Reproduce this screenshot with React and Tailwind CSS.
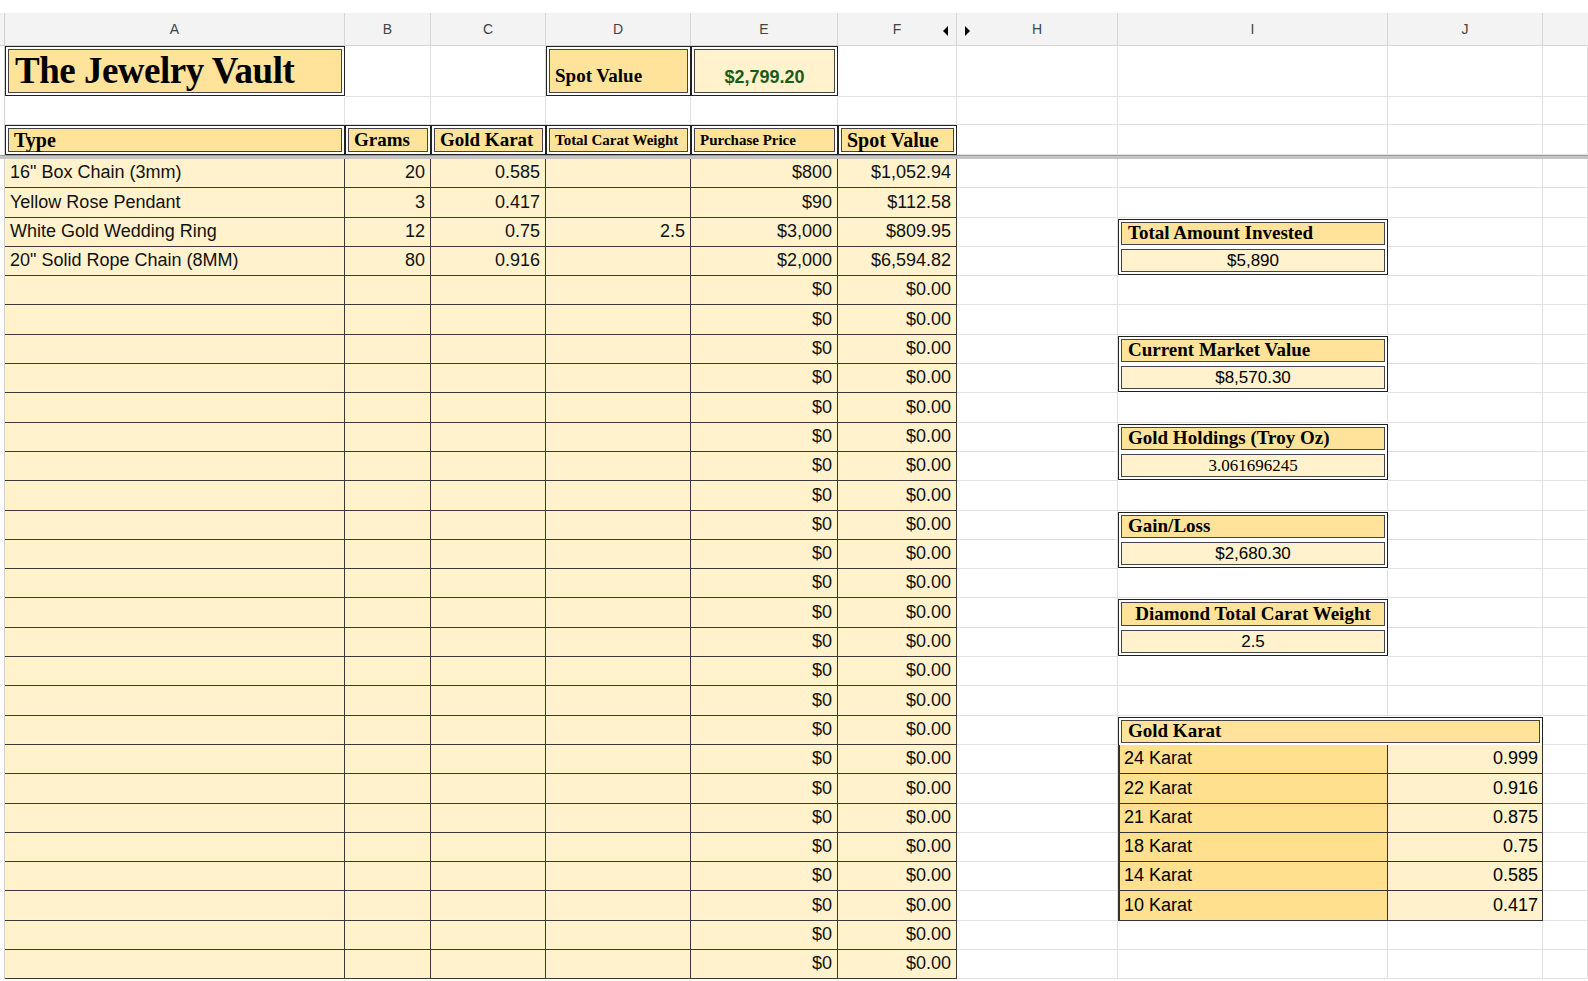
import React from 'react';

const serif = { fontFamily: '"Liberation Serif", "DejaVu Serif", serif' };
const sansF = { fontFamily: '"Liberation Sans", Arial, sans-serif' };

const W = { A: 'w-[340px]', B: 'w-[86px]', C: 'w-[115px]', D: 'w-[145px]', E: 'w-[147px]', F: 'w-[119px]', H: 'w-[161px]', I: 'w-[270px]', J: 'w-[155px]', K: 'flex-1' };

const items = [
  ['16" Box Chain (3mm)', '20', '0.585', '', '$800', '$1,052.94'],
  ['Yellow Rose Pendant', '3', '0.417', '', '$90', '$112.58'],
  ['White Gold Wedding Ring', '12', '0.75', '2.5', '$3,000', '$809.95'],
  ['20" Solid Rope Chain (8MM)', '80', '0.916', '', '$2,000', '$6,594.82'],
];

const boxes = {
  2: ['Total Amount Invested', 'label'], 3: ['$5,890', 'value'],
  6: ['Current Market Value', 'label'], 7: ['$8,570.30', 'value'],
  9: ['Gold Holdings (Troy Oz)', 'label'], 10: ['3.061696245', 'valueSerif'],
  12: ['Gain/Loss', 'label'], 13: ['$2,680.30', 'value'],
  15: ['Diamond Total Carat Weight', 'labelCenter'], 16: ['2.5', 'value'],
};

const karats = [['24 Karat', '0.999'], ['22 Karat', '0.916'], ['21 Karat', '0.875'], ['18 Karat', '0.75'], ['14 Karat', '0.585'], ['10 Karat', '0.417']];

function Grid({ w, className = '', children }) {
  return <div className={`${w} shrink-0 h-full border-r border-b border-[#e1e1e1] ${className}`}>{children}</div>;
}

function Double({ className = '', children, style }) {
  return (
    <div className="h-full p-[2px] border border-[#222]">
      <div className={`h-full border border-[#444] ${className}`} style={style}>{children}</div>
    </div>
  );
}

function RightCells({ i }) {
  const b = boxes[i];
  let I = <Grid w={W.I} />;
  let J = <Grid w={W.J} />;
  if (b) {
    const [text, kind] = b;
    const isLabel = kind.startsWith('label');
    I = (
      <div className={`${W.I} shrink-0 h-full ${isLabel ? 'pt-[1px]' : 'pb-[1px]'}`}>
        <div className={`h-full p-[2px] border-x border-[#222] ${isLabel ? 'border-t' : 'border-b'}`}>
          <div className={`h-full border border-[#444] flex items-center ${isLabel ? 'bg-[#ffe39a] px-[6px] text-[19px] font-bold' : 'bg-[#fff2cc] justify-center text-[17px]'} ${kind === 'labelCenter' ? 'justify-center' : ''}`} style={kind === 'value' ? sansF : serif}>
            {text}
          </div>
        </div>
      </div>
    );
  }
  if (i === 19) {
    I = (
      <div className={`${W.I} shrink-0 h-full pt-[1px]`}>
        <div className="h-full p-[2px] pr-0 border-l border-t border-[#222]">
          <div className="h-full border-y border-l border-[#444] bg-[#ffe39a] flex items-center px-[6px] text-[19px] font-bold" style={serif}>Gold Karat</div>
        </div>
      </div>
    );
    J = (
      <div className={`${W.J} shrink-0 h-full pt-[1px]`}>
        <div className="h-full p-[2px] pl-0 border-r border-t border-[#222]">
          <div className="h-full border-y border-r border-[#444] bg-[#ffe39a]" />
        </div>
      </div>
    );
  }
  if (i >= 20 && i <= 25) {
    const [k, v] = karats[i - 20];
    I = <div className={`${W.I} shrink-0 h-full bg-[#ffe08e] border-l-2 border-r border-b border-[#333] flex items-end pb-[1px] px-[4px] text-[18px]`} style={sansF}>{k}</div>;
    J = <div className={`${W.J} shrink-0 h-full bg-[#fff1cb] border-r border-b border-[#333] flex items-end justify-end pb-[1px] px-[4px] text-[18px]`} style={sansF}>{v}</div>;
  }
  return (
    <>
      <Grid w={W.H} />
      {I}
      {J}
      <Grid w={W.K} />
    </>
  );
}

function DataCell({ w, children, right }) {
  return (
    <div className={`${w} shrink-0 h-full bg-[#fff2cc] border-r border-b border-[#3a3a3a] flex items-end pb-[1px] px-[5px] text-[18px] text-[#111] ${right ? 'justify-end' : ''}`} style={sansF}>
      {children}
    </div>
  );
}

export default function App() {
  const rows = Array.from({ length: 28 }, (_, i) => i);
  const heads = [['A', 'Type', 'text-[20px]'], ['B', 'Grams', 'text-[19px]'], ['C', 'Gold Karat', 'text-[19px]'], ['D', 'Total Carat Weight', 'text-[15px]'], ['E', 'Purchase Price', 'text-[15px]'], ['F', 'Spot Value', 'text-[20px]']];
  return (
    <div className="w-[1588px] h-[981px] overflow-hidden bg-white text-black">
      <div className="h-[13px]" />
      {/* column letters */}
      <div className="flex h-[33px] bg-[#f3f3f3] text-[14px] text-[#444]" style={sansF}>
        <div className="w-[5px] shrink-0 border-r border-b border-[#d0d0d0]" />
        {['A', 'B', 'C', 'D', 'E'].map((c) => (
          <div key={c} className={`${W[c]} shrink-0 border-r border-b border-[#d6d6d6] flex items-center justify-center`}>{c}</div>
        ))}
        <div className={`${W.F} shrink-0 border-r border-b border-[#d6d6d6] flex items-center justify-center relative`}>
          F
          <span className="absolute right-[8px] top-[13px] w-0 h-0 border-y-[5px] border-y-transparent border-r-[5px] border-r-black" />
        </div>
        <div className={`${W.H} shrink-0 border-r border-b border-[#d6d6d6] flex items-center justify-center relative`}>
          <span className="absolute left-[8px] top-[13px] w-0 h-0 border-y-[5px] border-y-transparent border-l-[5px] border-l-black" />
          H
        </div>
        <div className={`${W.I} shrink-0 border-r border-b border-[#d6d6d6] flex items-center justify-center`}>I</div>
        <div className={`${W.J} shrink-0 border-r border-b border-[#d6d6d6] flex items-center justify-center`}>J</div>
        <div className="flex-1 border-b border-[#d6d6d6]" />
      </div>

      {/* title row */}
      <div className="flex h-[51px]">
        <div className="w-[5px] shrink-0 border-r border-[#d0d0d0]" />
        <div className={`${W.A} shrink-0 h-full pb-[1px]`}>
          <Double className="bg-[#ffe39a] flex items-center px-[6px] text-[37px] font-bold tracking-[-0.5px]" style={serif}>The Jewelry Vault</Double>
        </div>
        <Grid w={W.B} />
        <Grid w={W.C} />
        <div className={`${W.D} shrink-0 h-full pb-[1px]`}>
          <Double className="bg-[#ffe39a] flex items-end pb-[2px] px-[5px] text-[19px] font-bold" style={serif}>Spot Value</Double>
        </div>
        <div className={`${W.E} shrink-0 h-full pb-[1px]`}>
          <Double className="bg-[#fff2cc] flex items-end justify-center pb-[1px] text-[18px] font-bold text-[#1c5a1c]" style={sansF}>$2,799.20</Double>
        </div>
        <Grid w={W.F} />
        <Grid w={W.H} />
        <Grid w={W.I} />
        <Grid w={W.J} />
        <Grid w={W.K} />
      </div>

      {/* blank row */}
      <div className="flex h-[28px]">
        <div className="w-[5px] shrink-0 border-r border-[#d0d0d0]" />
        {['A', 'B', 'C', 'D', 'E', 'F', 'H', 'I', 'J', 'K'].map((c) => <Grid key={c} w={W[c]} />)}
      </div>

      {/* header row */}
      <div className="flex h-[30px]">
        <div className="w-[5px] shrink-0 border-r border-[#d0d0d0]" />
        {heads.map(([c, t, s]) => (
          <div key={c} className={`${W[c]} shrink-0 h-full`}>
            <Double className={`bg-[#ffe39a] flex items-center px-[5px] font-bold whitespace-nowrap ${s}`} style={serif}>{t}</Double>
          </div>
        ))}
        {['H', 'I', 'J', 'K'].map((c) => <Grid key={c} w={W[c]} />)}
      </div>
      <div className="h-[4px] bg-[#c4c4c4] border-t border-[#9e9e9e]" />

      {/* data rows */}
      {rows.map((i) => {
        const it = items[i];
        return (
          <div key={i} className="flex h-[29.3px]">
            <div className="w-[5px] shrink-0 border-r border-[#d0d0d0]" />
            <DataCell w={W.A}>{it ? it[0] : ''}</DataCell>
            <DataCell w={W.B} right>{it ? it[1] : ''}</DataCell>
            <DataCell w={W.C} right>{it ? it[2] : ''}</DataCell>
            <DataCell w={W.D} right>{it ? it[3] : ''}</DataCell>
            <DataCell w={W.E} right>{it ? it[4] : '$0'}</DataCell>
            <DataCell w={W.F} right>{it ? it[5] : '$0.00'}</DataCell>
            <RightCells i={i} />
          </div>
        );
      })}
    </div>
  );
}
